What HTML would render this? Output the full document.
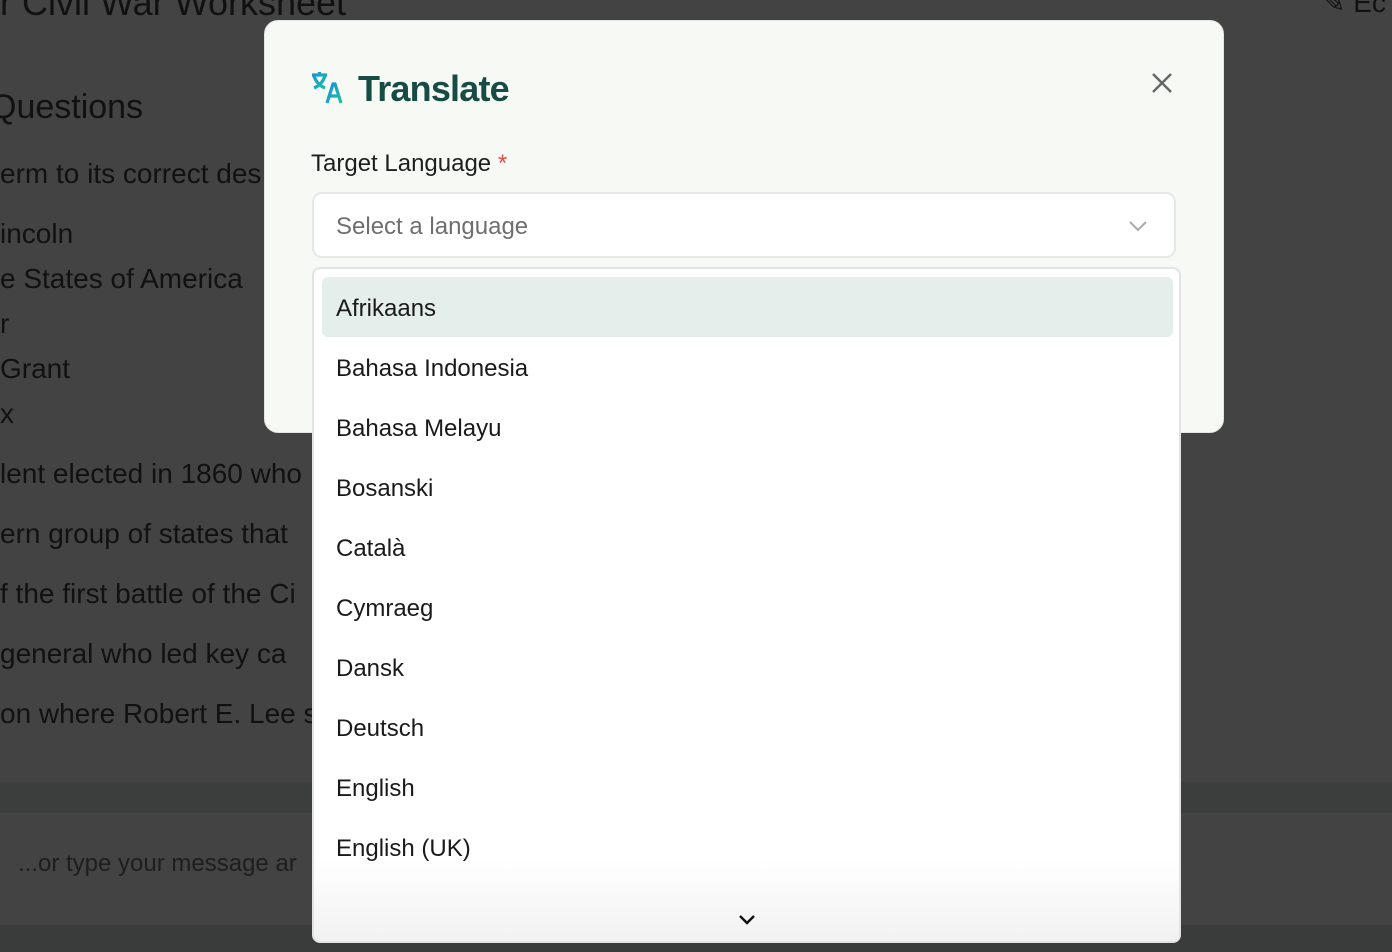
<!DOCTYPE html>
<html><head><meta charset="utf-8">
<style>
*{box-sizing:border-box;margin:0;padding:0}
body{width:1392px;height:952px;overflow:hidden;background:#434343;font-family:"Liberation Sans",sans-serif;position:relative}
.bg{position:absolute;left:0;color:#111;font-size:28px;white-space:nowrap;letter-spacing:0px}
.band1{position:absolute;left:0;top:782px;width:1392px;height:31px;background:#3c3e3e}
.band2{position:absolute;left:0;top:925px;width:1392px;height:27px;background:#3a3c3c}
.modal{position:absolute;left:264px;top:20px;width:960px;height:413px;background:#f7f9f5;border-radius:14px;border:1px solid #e2e4e0}
.title{position:absolute;left:358px;top:68px;font-size:36px;font-weight:bold;color:#174b45;letter-spacing:-0.8px}
.close{position:absolute;left:1150px;top:71px}
.label{position:absolute;left:311px;top:150px;font-size:24px;color:#1e1e1e}
.label span{color:#e5484d}
.select{position:absolute;left:312px;top:192px;width:864px;height:66px;background:#fff;border:2px solid #e6e8e4;border-radius:10px}
.select .ph{position:absolute;left:22px;top:19px;font-size:24px;color:#6e6e6e}
.dd{position:absolute;left:312px;top:267px;width:869px;height:676px;background:linear-gradient(#fff 590px,#f1f1f1 676px);border:2px solid #e3e3e3;border-radius:8px;overflow:hidden}
.item{position:absolute;left:22px;font-size:24px;color:#1a1a1a}
.hl{position:absolute;left:8px;top:8px;width:851px;height:60px;background:#e4eeea;border-radius:6px}
</style></head><body>
<div class="bg" style="top:-18px;font-size:36px">r Civil War Worksheet</div>
<div class="bg" style="top:88px;font-size:34px;left:-10px">Questions</div>
<div class="bg" style="top:158px">erm to its correct des</div>
<div class="bg" style="top:218px">incoln</div>
<div class="bg" style="top:263px">e States of America</div>
<div class="bg" style="top:308px">r</div>
<div class="bg" style="top:353px">Grant</div>
<div class="bg" style="top:398px">x</div>
<div class="bg" style="top:458px">lent elected in 1860 who</div>
<div class="bg" style="top:518px">ern group of states that</div>
<div class="bg" style="top:578px">f the first battle of the Ci</div>
<div class="bg" style="top:638px"> general who led key ca</div>
<div class="bg" style="top:698px">on where Robert E. Lee s</div>
<div class="band1"></div>
<div class="band2"></div>
<div class="bg" style="top:850px;left:18px;font-size:24px;color:#1e1e1e">...or type your message ar</div>
<div class="bg" style="top:-14px;left:1322px;font-size:28px">✎ Ec</div>

<div class="modal"></div>
<svg style="position:absolute;left:310px;top:70px" width="34" height="34" viewBox="0 0 34 34">
<defs><linearGradient id="g" x1="0" y1="0" x2="1" y2="1"><stop offset="0" stop-color="#1d8fe0"/><stop offset="1" stop-color="#17c39a"/></linearGradient></defs>
<g fill="none" stroke="url(#g)" stroke-width="3.2">
<path d="M2 5h15M9.5 2v3M4 6c2 6 6 10 11 12M15 6c-2 6-6 10-11 12"/>
<path d="M17 33l6-19h2l6 19M19.5 26h9"/>
</g></svg>
<div class="title">Translate</div>
<svg class="close" width="24" height="24" viewBox="0 0 24 24"><path d="M3 3l18 18M21 3L3 21" stroke="#666" stroke-width="2.4"/></svg>
<div class="label">Target Language <span>*</span></div>
<div class="select"><div class="ph">Select a language</div>
<svg style="position:absolute;left:814px;top:26px" width="20" height="12" viewBox="0 0 20 12"><path d="M2 2l8 8 8-8" fill="none" stroke="#aaa" stroke-width="2"/></svg></div>
<div class="dd">
<div class="hl"></div>
<div class="item" style="top:26px">Afrikaans</div>
<div class="item" style="top:86px">Bahasa Indonesia</div>
<div class="item" style="top:146px">Bahasa Melayu</div>
<div class="item" style="top:206px">Bosanski</div>
<div class="item" style="top:266px">Català</div>
<div class="item" style="top:326px">Cymraeg</div>
<div class="item" style="top:386px">Dansk</div>
<div class="item" style="top:446px">Deutsch</div>
<div class="item" style="top:506px">English</div>
<div class="item" style="top:566px">English (UK)</div>
<svg style="position:absolute;left:424px;top:645px" width="18" height="12" viewBox="0 0 18 12"><path d="M2 2l7 7 7-7" fill="none" stroke="#111" stroke-width="2.4"/></svg>
</div>
</body></html>
